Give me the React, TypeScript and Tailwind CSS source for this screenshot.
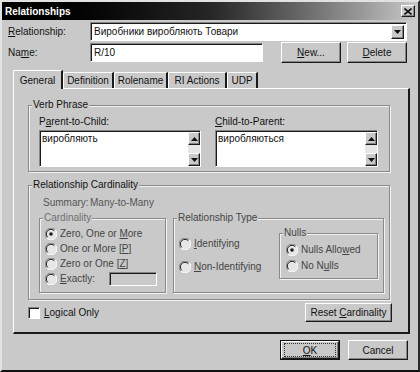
import React from 'react';

const font = { fontFamily: '"Liberation Sans", Arial, sans-serif' };

// raised 3D edge (Win95 style)
const raised =
    'border border-t-white border-l-white border-r-[#1a1a1a] border-b-[#1a1a1a] shadow-[inset_-1px_-1px_0_#858585]';
// sunken field edge
const sunken =
    'border border-t-[#858585] border-l-[#858585] border-r-white border-b-white shadow-[inset_1px_1px_0_#1a1a1a]';

function U({ children }: { children: React.ReactNode }) {
    return <span className="underline underline-offset-[1px]">{children}</span>;
}

function Btn({ children, className = '' }: { children: React.ReactNode; className?: string }) {
    return (
        <div className={`flex items-center justify-center bg-[#c9c9c9] text-[10px] text-[#111] ${raised} ${className}`}>
            {children}
        </div>
    );
}

function Arrow({ dir, className = '' }: { dir: 'up' | 'down'; className?: string }) {
    return (
        <div className={`flex items-center justify-center bg-[#c9c9c9] ${raised} ${className}`}>
            <svg width="7" height="4" viewBox="0 0 7 4">
                {dir === 'up' ? <path d="M3.5 0 L7 4 L0 4 Z" fill="#111" /> : <path d="M0 0 L7 0 L3.5 4 Z" fill="#111" />}
            </svg>
        </div>
    );
}

function Radio({ checked, label, className = '' }: { checked?: boolean; label: React.ReactNode; className?: string }) {
    return (
        <div className={`flex items-center gap-[3px] h-[13px] ${className}`}>
            <svg width="12" height="12" viewBox="0 0 12 12" className="shrink-0">
                <circle cx="6" cy="6" r="5.5" fill="#e6e6e6" />
                <path d="M10.2 1.8 A5.5 5.5 0 0 0 1.8 10.2" stroke="#858585" fill="none" />
                <path d="M1.8 10.2 A5.5 5.5 0 0 0 10.2 1.8" stroke="#ffffff" fill="none" />
                <path d="M9.3 2.7 A4.5 4.5 0 0 0 2.7 9.3" stroke="#1a1a1a" fill="none" />
                {checked && <circle cx="6" cy="6" r="1.8" fill="#1a1a1a" />}
            </svg>
            <span className="text-[10px] leading-none">{label}</span>
        </div>
    );
}

function Group({ title, className = '', titleClass = '', children }: { title: string; className?: string; titleClass?: string; children?: React.ReactNode }) {
    return (
        <div className={`relative border border-[#8a8a8a] shadow-[1px_1px_0_#f2f2f2,inset_1px_1px_0_#f2f2f2] ${className}`}>
            <span className={`absolute -top-[7px] left-[3px] bg-[#c9c9c9] px-[1px] text-[10px] leading-[12px] ${titleClass}`}>
                {title}
            </span>
            {children}
        </div>
    );
}

function Memo({ text }: { text: string }) {
    return (
        <div className={`flex h-[37px] bg-white ${sunken}`}>
            <div className="flex-1 pl-[2px] pt-[2px] text-[10px] leading-[12px] text-[#111]">{text}</div>
            <div className="mt-[1px] flex w-[12px] flex-col justify-between bg-[#e6e6e6]">
                <Arrow dir="up" className="h-[13px] w-[12px]" />
                <Arrow dir="down" className="h-[13px] w-[12px]" />
            </div>
        </div>
    );
}

function Tab({ label, w, active }: { label: string; w: string; active?: boolean }) {
    return (
        <div
            className={`flex items-center justify-center bg-[#c9c9c9] text-[10px] text-[#111] border-t border-l border-t-white border-l-white border-r-2 border-r-[#1a1a1a] rounded-tl-[2px] ${w} ${
                active ? 'relative z-10 -mb-[1px] h-[19px]' : 'h-[16px]'
            }`}
        >
            {label}
        </div>
    );
}

export default function App() {
    return (
        <div
            style={font}
            className="flex h-[372px] w-[420px] flex-col overflow-hidden bg-[#c9c9c9] text-[#111] border-l-2 border-t-2 border-l-[#e2e2e2] border-t-[#e2e2e2] border-r-2 border-b-2 border-r-[#2a2a2a] border-b-[#111]"
        >
            {/* Title bar */}
            <div className="flex h-[18px] shrink-0 items-center justify-between bg-linear-to-r from-black via-[#262626] via-50% to-[#c9c9c9] pl-[3px] pr-[3px]">
                <span className="text-[10px] font-bold text-white">Relationships</span>
                <div className={`flex h-[12px] w-[14px] items-center justify-center bg-[#c9c9c9] ${raised}`}>
                    <svg width="8" height="7" viewBox="0 0 8 7">
                        <path d="M0.5 0.5 L7.5 6.5 M7.5 0.5 L0.5 6.5" stroke="#111" strokeWidth="1.6" />
                    </svg>
                </div>
            </div>

            {/* Relationship row */}
            <div className="mt-[2px] flex h-[19px] items-center pl-[6px]">
                <span className="w-[82px] text-[10px]">
                    <U>R</U>elationship:
                </span>
                <div className={`flex h-[19px] w-[317px] items-center justify-between bg-white pl-[3px] pr-[2px] ${sunken}`}>
                    <span className="text-[10px]">Виробники виробляють Товари</span>
                    <Arrow dir="down" className="h-[14px] w-[13px]" />
                </div>
            </div>

            {/* Name row */}
            <div className="mt-[1px] flex h-[21px] items-center pl-[6px]">
                <span className="w-[82px] text-[10px]">
                    Na<U>m</U>e:
                </span>
                <div className={`flex h-[19px] w-[173px] items-center bg-white pl-[3px] text-[10px] ${sunken}`}>R/10</div>
                <Btn className="ml-[18px] h-[21px] w-[60px]">
                    <span>
                        <U>N</U>ew...
                    </span>
                </Btn>
                <Btn className="ml-[6px] h-[21px] w-[60px]">
                    <span>
                        <U>D</U>elete
                    </span>
                </Btn>
            </div>

            {/* Tabs */}
            <div className="mt-[7px] flex items-end pl-[11px]">
                <Tab label="General" w="w-[50px]" active />
                <Tab label="Definition" w="w-[51px]" />
                <Tab label="Rolename" w="w-[54px]" />
                <Tab label="RI Actions" w="w-[59px]" />
                <Tab label="UDP" w="w-[31px]" />
            </div>

            {/* Tab panel */}
            <div className="ml-[11px] flex h-[246px] w-[397px] flex-col border-t border-l border-t-white border-l-white border-r-2 border-b-2 border-r-[#1a1a1a] border-b-[#1a1a1a] pl-[14px]">
                {/* Verb Phrase */}
                <Group title="Verb Phrase" className="mt-[16px] flex h-[67px] w-[362px] gap-[14px] pl-[10px] pt-[10px]">
                    <div className="flex w-[162px] flex-col gap-[2px]">
                        <span className="text-[10px] leading-[12px]">
                            P<U>a</U>rent-to-Child:
                        </span>
                        <Memo text="виробляють" />
                    </div>
                    <div className="flex w-[163px] flex-col gap-[2px]">
                        <span className="text-[10px] leading-[12px]">
                            <U>C</U>hild-to-Parent:
                        </span>
                        <Memo text="виробляються" />
                    </div>
                </Group>

                {/* Relationship Cardinality */}
                <Group title="Relationship Cardinality" className="mt-[13px] flex h-[115px] w-[362px] flex-col pl-[10px] pt-[11px]">
                    <div className="flex text-[10px] leading-[12px] text-[#555]">
                        <span className="ml-[4px] inline-block w-[47px] shrink-0">Summary:</span>
                        <span>Many-to-Many</span>
                    </div>
                    <div className="mt-[9px] flex gap-[7px]">
                        <Group title="Cardinality" titleClass="text-[#707070]" className="flex h-[75px] w-[127px] flex-col gap-[2px] pl-[5px] pt-[8px] text-[#444]">
                            <Radio checked label={<>Zero, One or <U>M</U>ore</>} />
                            <Radio label={<>One or More [<U>P</U>]</>} />
                            <Radio label={<>Zero or One [<U>Z</U>]</>} />
                            <div className="flex items-center">
                                <Radio label={<><U>E</U>xactly:</>} />
                                <div className={`ml-[14px] h-[14px] w-[48px] bg-[#c9c9c9] ${sunken}`} />
                            </div>
                        </Group>
                        <Group title="Relationship Type" className="flex h-[75px] w-[211px] pl-[5px] text-[#444]">
                            <div className="flex w-[100px] flex-col gap-[10px] pt-[18px]">
                                <Radio label={<><U>I</U>dentifying</>} />
                                <Radio label={<><U>N</U>on-Identifying</>} />
                            </div>
                            <Group title="Nulls" className="mt-[14px] flex h-[46px] w-[99px] flex-col gap-[3px] pl-[6px] pt-[9px]">
                                <Radio checked label={<>Nulls Allo<U>w</U>ed</>} />
                                <Radio label={<>No N<U>u</U>lls</>} />
                            </Group>
                        </Group>
                    </div>
                </Group>

                {/* Logical only + reset */}
                <div className="mt-[3px] flex h-[19px] w-[364px] items-center justify-between">
                    <div className="flex items-center gap-[4px]">
                        <div className={`h-[12px] w-[12px] bg-white ${sunken}`} />
                        <span className="text-[10px]">
                            <U>L</U>ogical Only
                        </span>
                    </div>
                    <Btn className="h-[19px] w-[87px]">
                        <span>
                            Reset <U>C</U>ardinality
                        </span>
                    </Btn>
                </div>
            </div>

            {/* OK / Cancel */}
            <div className="mt-[6px] flex justify-end gap-[8px] pr-[10px]">
                <div className="border border-[#111]">
                    <Btn className="h-[18px] w-[58px]">
                        <span className="flex h-[14px] w-[52px] items-center justify-center border border-dotted border-[#333]">
                            <U>O</U>K
                        </span>
                    </Btn>
                </div>
                <Btn className="h-[20px] w-[60px]">Cancel</Btn>
            </div>
        </div>
    );
}
